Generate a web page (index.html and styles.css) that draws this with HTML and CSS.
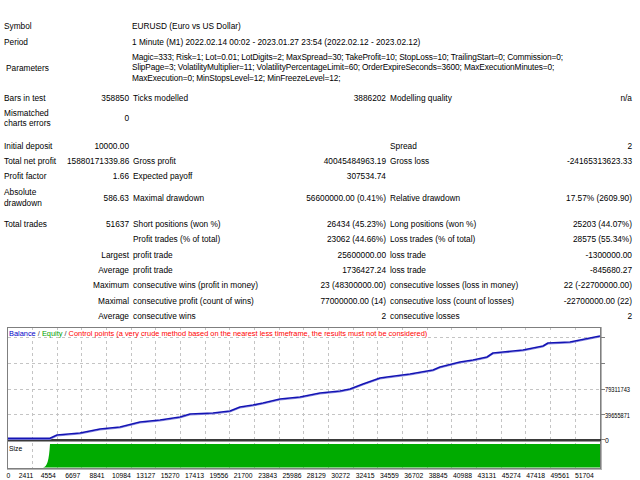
FILE: index.html
```html
<!DOCTYPE html>
<html>
<head>
<meta charset="utf-8">
<link rel="stylesheet" href="styles.css">
</head>
<body>
<div class="report">
  <div class="row h16"><div class="lbl span2l">Symbol</div><div class="wide">EURUSD (Euro vs US Dollar)</div></div>
  <div class="row h16"><div class="lbl span2l">Period</div><div class="wide">1 Minute (M1) 2022.02.14 00:02 - 2023.01.27 23:54 (2022.02.12 - 2023.02.12)</div></div>
  <div class="row params"><div class="lbl span2l ind">Parameters</div><div class="wide ml tight">Magic=333; Risk=1; Lot=0.01; LotDigits=2; MaxSpread=30; TakeProfit=10; StopLoss=10; TrailingStart=0; Commission=0;<br>SlipPage=3; VolatilityMultiplier=11; VolatilityPercentageLimit=60; OrderExpireSeconds=3600; MaxExecutionMinutes=0;<br>MaxExecution=0; MinStopsLevel=12; MinFreezeLevel=12;</div></div>
  <div class="row h16 sp4"><div class="lbl">Bars in test</div><div class="val">358850</div><div class="lbl2">Ticks modelled</div><div class="val">3886202</div><div class="lbl3">Modelling quality</div><div class="val">n/a</div></div>
  <div class="row h25"><div class="lbl ml">Mismatched<br>charts errors</div><div class="val">0</div><div class="lbl2"></div><div class="val"></div><div class="lbl3"></div><div class="val"></div></div>
  <div class="row h15 sp7"><div class="lbl">Initial deposit</div><div class="val">10000.00</div><div class="lbl2"></div><div class="val"></div><div class="lbl3">Spread</div><div class="val">2</div></div>
  <div class="row h15"><div class="lbl">Total net profit</div><div class="val">15880171339.86</div><div class="lbl2">Gross profit</div><div class="val">40045484963.19</div><div class="lbl3">Gross loss</div><div class="val">-24165313623.33</div></div>
  <div class="row h15"><div class="lbl">Profit factor</div><div class="val">1.66</div><div class="lbl2">Expected payoff</div><div class="val">307534.74</div><div class="lbl3"></div><div class="val"></div></div>
  <div class="row h27"><div class="lbl ml">Absolute<br>drawdown</div><div class="val">586.63</div><div class="lbl2">Maximal drawdown</div><div class="val">56600000.00 (0.41%)</div><div class="lbl3">Relative drawdown</div><div class="val">17.57% (2609.90)</div></div>
  <div class="row h15 sp5"><div class="lbl">Total trades</div><div class="val">51637</div><div class="lbl2">Short positions (won %)</div><div class="val">26434 (45.23%)</div><div class="lbl3">Long positions (won %)</div><div class="val">25203 (44.07%)</div></div>
  <div class="row h15"><div class="span2"></div><div class="lbl2">Profit trades (% of total)</div><div class="val">23062 (44.66%)</div><div class="lbl3">Loss trades (% of total)</div><div class="val">28575 (55.34%)</div></div>
  <div class="row h15"><div class="span2">Largest</div><div class="lbl2">profit trade</div><div class="val">25600000.00</div><div class="lbl3">loss trade</div><div class="val">-1300000.00</div></div>
  <div class="row h15"><div class="span2">Average</div><div class="lbl2">profit trade</div><div class="val">1736427.24</div><div class="lbl3">loss trade</div><div class="val">-845680.27</div></div>
  <div class="row h15"><div class="span2">Maximum</div><div class="lbl2">consecutive wins (profit in money)</div><div class="val">23 (48300000.00)</div><div class="lbl3">consecutive losses (loss in money)</div><div class="val">22 (-22700000.00)</div></div>
  <div class="row h15"><div class="span2">Maximal</div><div class="lbl2">consecutive profit (count of wins)</div><div class="val">77000000.00 (14)</div><div class="lbl3">consecutive loss (count of losses)</div><div class="val">-22700000.00 (22)</div></div>
  <div class="row h15"><div class="span2">Average</div><div class="lbl2">consecutive wins</div><div class="val">2</div><div class="lbl3">consecutive losses</div><div class="val">2</div></div>
</div>
<div class="chart">
<svg class="chart-svg" width="640" height="158" viewBox="0 322 640 158" xmlns="http://www.w3.org/2000/svg">
  <rect x="7.5" y="326.5" width="593" height="141" fill="#ffffff" stroke="#7f7f7f"/>
  <line x1="601.5" y1="326" x2="601.5" y2="469" stroke="#b4b4b4"/>
  <line x1="7" y1="468.5" x2="602" y2="468.5" stroke="#b4b4b4"/>
  <g stroke="#c4c4c4" stroke-dasharray="3,3" stroke-width="1">
    <line x1="8" y1="336.5" x2="600" y2="336.5"/>
    <line x1="8" y1="362.5" x2="600" y2="362.5"/>
    <line x1="8" y1="388.5" x2="600" y2="388.5"/>
    <line x1="8" y1="413.5" x2="600" y2="413.5"/>
  </g>
  <g stroke="#c4c4c4" stroke-dasharray="3,3" stroke-width="1">
    <line x1="32.5" y1="340" x2="32.5" y2="467"/>
    <line x1="57.5" y1="340" x2="57.5" y2="467"/>
    <line x1="81.5" y1="340" x2="81.5" y2="467"/>
    <line x1="106.5" y1="340" x2="106.5" y2="467"/>
    <line x1="131.5" y1="340" x2="131.5" y2="467"/>
    <line x1="155.5" y1="340" x2="155.5" y2="467"/>
    <line x1="180.5" y1="340" x2="180.5" y2="467"/>
    <line x1="205.5" y1="340" x2="205.5" y2="467"/>
    <line x1="229.5" y1="340" x2="229.5" y2="467"/>
    <line x1="254.5" y1="340" x2="254.5" y2="467"/>
    <line x1="279.5" y1="340" x2="279.5" y2="467"/>
    <line x1="303.5" y1="340" x2="303.5" y2="467"/>
    <line x1="328.5" y1="340" x2="328.5" y2="467"/>
    <line x1="353.5" y1="340" x2="353.5" y2="467"/>
    <line x1="377.5" y1="340" x2="377.5" y2="467"/>
    <line x1="402.5" y1="340" x2="402.5" y2="467"/>
    <line x1="427.5" y1="340" x2="427.5" y2="467"/>
    <line x1="451.5" y1="340" x2="451.5" y2="467"/>
    <line x1="476.5" y1="340" x2="476.5" y2="467"/>
    <line x1="501.5" y1="340" x2="501.5" y2="467"/>
    <line x1="525.5" y1="340" x2="525.5" y2="467"/>
    <line x1="550.5" y1="340" x2="550.5" y2="467"/>
    <line x1="575.5" y1="340" x2="575.5" y2="467"/>
  </g>
  <g stroke="#c4c4c4" stroke-width="1">
    <line x1="32.5" y1="327" x2="32.5" y2="329"/>
    <line x1="57.5" y1="327" x2="57.5" y2="329"/>
    <line x1="81.5" y1="327" x2="81.5" y2="329"/>
    <line x1="106.5" y1="327" x2="106.5" y2="329"/>
    <line x1="131.5" y1="327" x2="131.5" y2="329"/>
    <line x1="155.5" y1="327" x2="155.5" y2="329"/>
    <line x1="180.5" y1="327" x2="180.5" y2="329"/>
    <line x1="205.5" y1="327" x2="205.5" y2="329"/>
    <line x1="229.5" y1="327" x2="229.5" y2="329"/>
    <line x1="254.5" y1="327" x2="254.5" y2="329"/>
    <line x1="279.5" y1="327" x2="279.5" y2="329"/>
    <line x1="303.5" y1="327" x2="303.5" y2="329"/>
    <line x1="328.5" y1="327" x2="328.5" y2="329"/>
    <line x1="353.5" y1="327" x2="353.5" y2="329"/>
    <line x1="377.5" y1="327" x2="377.5" y2="329"/>
    <line x1="402.5" y1="327" x2="402.5" y2="329"/>
    <line x1="427.5" y1="327" x2="427.5" y2="329"/>
    <line x1="451.5" y1="327" x2="451.5" y2="329"/>
    <line x1="476.5" y1="327" x2="476.5" y2="329"/>
    <line x1="501.5" y1="327" x2="501.5" y2="329"/>
    <line x1="525.5" y1="327" x2="525.5" y2="329"/>
    <line x1="550.5" y1="327" x2="550.5" y2="329"/>
    <line x1="575.5" y1="327" x2="575.5" y2="329"/>
  </g>
  <path d="M43 466.5 C47 466 49 460 50 443 L600 443 L600 466.5 Z" fill="#00ab00"/>
  <rect x="8" y="438" width="593" height="2" fill="#3a3a3a"/>
  <line x1="8" y1="440.5" x2="600" y2="440.5" stroke="#9a9a9a"/>
  <polyline fill="none" stroke="#8a8ae0" stroke-width="1" points="8,438.5 50,438.5 57,435 80,433 100,429 120,427 140,422 160,420 180,417 190,414 213,413 230,411 240,407 253,405 263,403 280,399 300,397 320,393 340,391 350,389 363,384 380,378 387,377 410,374 433,370 440,367 460,362 473,360 487,357 493,353 503,352 523,350 543,346 548,343 570,342 580,340 590,338 600,336"/>
  <polyline fill="none" stroke="#1414b4" stroke-width="1.7" stroke-linejoin="round" points="8,437.3 50,437.3 57,434 80,432 100,428 120,426 140,421 160,419 180,416 190,413 213,412 230,410 240,406 253,404 263,402 280,398 300,396 320,392 340,390 350,388 363,383 380,377 387,376 410,373 433,369 440,366 460,361 473,359 487,356 493,352 503,351 523,349 543,345 548,342 570,341 580,339 590,337 600,335"/>
  <g stroke="#7f7f7f">
    <line x1="601" y1="336.5" x2="605" y2="336.5"/>
    <line x1="601" y1="362.5" x2="605" y2="362.5"/>
    <line x1="601" y1="388.5" x2="605" y2="388.5"/>
    <line x1="601" y1="413.5" x2="605" y2="413.5"/>
    <line x1="601" y1="438.5" x2="605" y2="438.5"/>
  </g>
  <text class="legend" x="9" y="334.5"><tspan fill="#0000c8">Balance</tspan><tspan fill="#404040"> / </tspan><tspan fill="#00a000">Equity</tspan><tspan fill="#404040"> / </tspan><tspan fill="#ff0000">Control points (a very crude method based on the nearest less timeframe, the results must not be considered)</tspan></text>
  <text class="axis size" x="9" y="450">Size</text>
  <g class="axis">
    <text x="605" y="391" textLength="25" lengthAdjust="spacingAndGlyphs">79311743</text>
    <text x="605" y="416.5" textLength="25" lengthAdjust="spacingAndGlyphs">39655871</text>
    <text x="605" y="441.5">0</text>
  </g>
  <g class="axis" text-anchor="middle">
    <text x="8.5" y="476.5">0</text>
    <text x="26" y="476.5">2411</text>
    <text x="48.3" y="476.5">4554</text>
    <text x="72.7" y="476.5">6697</text>
    <text x="97" y="476.5">8841</text>
    <text x="121.4" y="476.5">10984</text>
    <text x="145.8" y="476.5">13127</text>
    <text x="170.1" y="476.5">15270</text>
    <text x="194.5" y="476.5">17413</text>
    <text x="218.9" y="476.5">19556</text>
    <text x="243.2" y="476.5">21700</text>
    <text x="267.6" y="476.5">23843</text>
    <text x="292" y="476.5">25986</text>
    <text x="316.3" y="476.5">28129</text>
    <text x="340.7" y="476.5">30272</text>
    <text x="365.1" y="476.5">32415</text>
    <text x="389.4" y="476.5">34559</text>
    <text x="413.8" y="476.5">36702</text>
    <text x="438.2" y="476.5">38845</text>
    <text x="462.5" y="476.5">40988</text>
    <text x="486.9" y="476.5">43131</text>
    <text x="511.3" y="476.5">45274</text>
    <text x="535.6" y="476.5">47418</text>
    <text x="560" y="476.5">49561</text>
    <text x="584.4" y="476.5">51704</text>
  </g>
</svg>
</div>
</body>
</html>
```
FILE: styles.css
```css
html, body {
  margin: 0;
  padding: 0;
  background: #ffffff;
}
body {
  font-family: "Liberation Sans", Arial, sans-serif;
  font-size: 8.3px;
  color: #000000;
  width: 640px;
  height: 480px;
  overflow: hidden;
}
.report {
  padding: 17.5px 0 0 4px;
  width: 628px;
}
.row {
  display: grid;
  grid-template-columns: 63px 62px 153px 104px 142px 104px;
  align-items: center;
  white-space: nowrap;
}
.h16 { height: 16px; }
.h15 { height: 15.3px; }
.h25 { height: 25px; }
.h27 { height: 27.5px; }
.params { height: 36px; }
.sp4 { margin-top: 4px; }
.sp5 { margin-top: 5px; }
.sp7 { margin-top: 7.5px; }
.lbl { padding-left: 0; }
.span2l { grid-column: 1 / 3; }
.ind { padding-left: 2px; }
.ml { white-space: normal; line-height: 10.5px; }
.wide {
  grid-column: 3 / 7;
  padding-left: 3px;
  white-space: nowrap;
}
.tight { letter-spacing: -0.12px; }
.val { text-align: right; }
.lbl2 { padding-left: 4px; }
.lbl3 { padding-left: 4px; }
.span2 {
  grid-column: 1 / 3;
  text-align: right;
}
.chart { height: 158px; }
.chart-svg { display: block; }
.legend { font-family: "Liberation Sans", Arial, sans-serif; font-size: 7.4px; }
.axis { font-family: "Liberation Sans", Arial, sans-serif; font-size: 6.8px; fill: #000000; }
.size { font-size: 6.8px; }
```
